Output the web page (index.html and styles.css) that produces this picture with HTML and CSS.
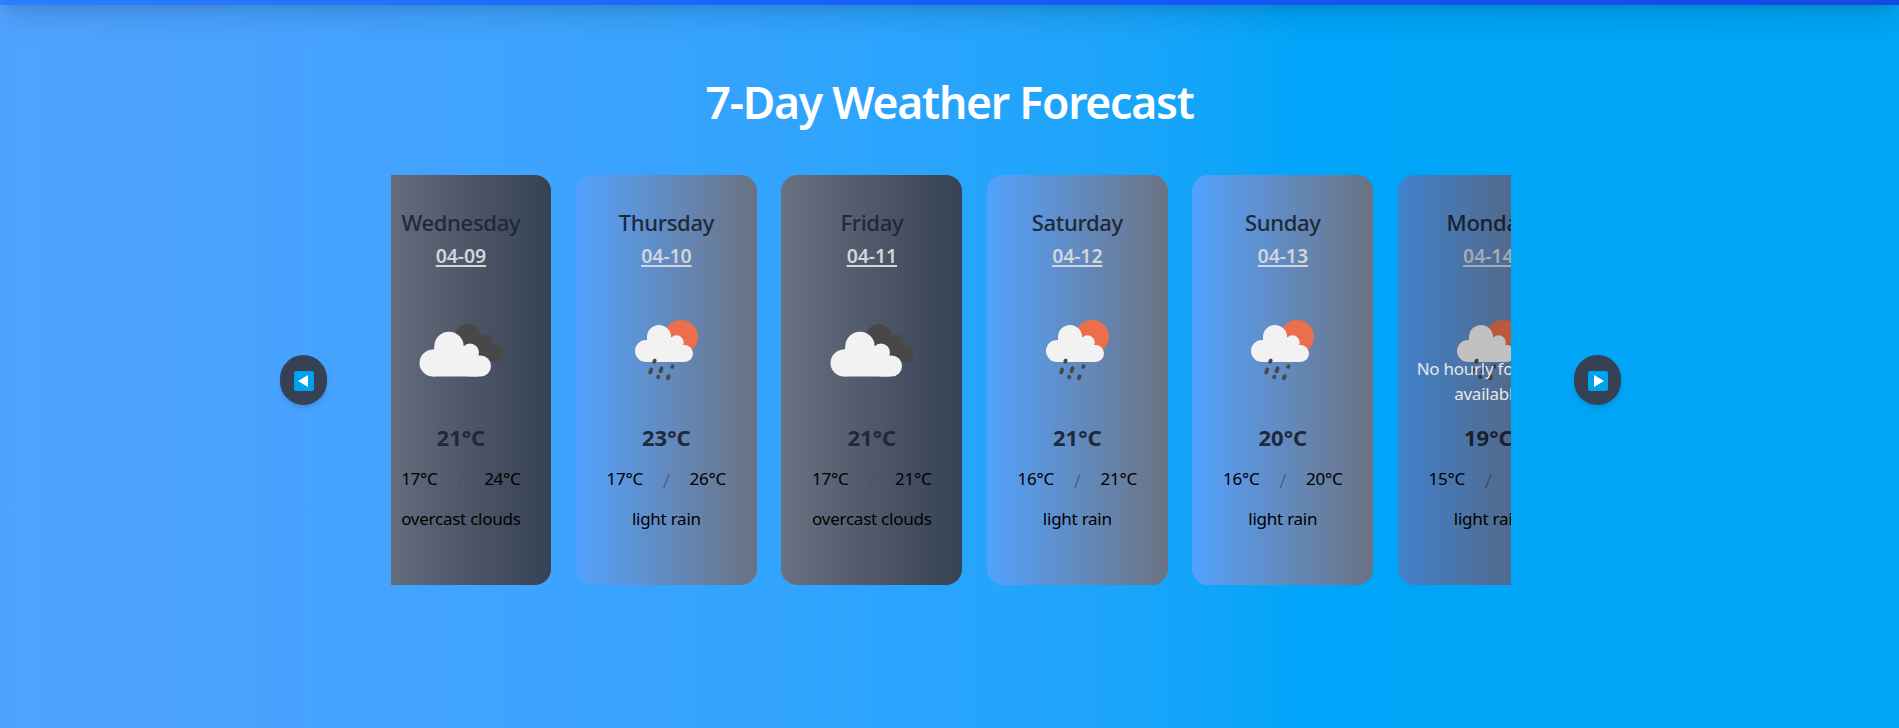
FILE: index.html
```html
<!DOCTYPE html>
<html lang="en">
<head>
<meta charset="utf-8">
<title>7-Day Weather Forecast</title>
<link rel="stylesheet" href="styles.css">
</head>
<body>
<svg class="defs" aria-hidden="true">
  <symbol id="clouds" viewBox="0 0 110 80">
    <g fill="#484848"><circle cx="68" cy="27" r="13"/><circle cx="85.500" cy="32" r="7.500"/><circle cx="94.500" cy="43.500" r="8.700"/><path d="M60 20h18l12 14v18H60z"/></g>
    <g fill="#f2f2f2"><circle cx="49" cy="36.500" r="14.700"/><circle cx="70" cy="42.500" r="9"/><rect x="19.500" y="39.500" width="27" height="27" rx="13.500"/><rect x="60" y="45.500" width="31" height="21" rx="10.500"/><path d="M34.300 39.500v-3h30l14 9v21H33v-27z"/></g>
  </symbol>
  <symbol id="rain" viewBox="0 0 100 80">
    <circle cx="61" cy="27" r="17" fill="#ec6e4c"/>
    <g fill="#f2f2f2"><circle cx="39" cy="27" r="12"/><circle cx="56.500" cy="32.500" r="7.200"/><rect x="15" y="30" width="22" height="22" rx="11"/><rect x="48" y="35" width="25" height="17" rx="8.500"/><path d="M27 30v-3h24l12 8v17H26V30z"/></g>
    <path d="M34.700 50.600l-.5 1.200M31.200 59.500l-1 3M41.600 58.300l-1.100 3M52.500 56.300l-.3.600M38.300 66.800l-.2.500M48.700 66.300l-.8 2" fill="none" stroke="#484848" stroke-width="3.800" stroke-linecap="round"/>
  </symbol>
</svg>
<header class="topbar"></header>
<main>
  <h1>7-Day Weather Forecast</h1>
  <div class="carousel">
    <button class="nav" aria-label="Previous"><svg viewBox="0 0 20 20"><rect width="20" height="20" rx="2" fill="#00a2ed"/><path d="M4 10l10-6v12z" fill="#fff"/></svg></button>
    <div class="viewport">
      <div class="track">
        <article class="card dark"><h2>Wednesday</h2><p class="date">04-09</p><svg class="icon cloudy"><use href="#clouds"/></svg><p class="temp">21°C</p><div class="range"><span>17°C</span><i>/</i><span>24°C</span></div><p class="desc">overcast clouds</p></article>
        <article class="card"><h2>Thursday</h2><p class="date">04-10</p><svg class="icon"><use href="#rain"/></svg><p class="temp">23°C</p><div class="range"><span>17°C</span><i>/</i><span>26°C</span></div><p class="desc">light rain</p></article>
        <article class="card dark"><h2>Friday</h2><p class="date">04-11</p><svg class="icon cloudy"><use href="#clouds"/></svg><p class="temp">21°C</p><div class="range"><span>17°C</span><i>/</i><span>21°C</span></div><p class="desc">overcast clouds</p></article>
        <article class="card"><h2>Saturday</h2><p class="date">04-12</p><svg class="icon"><use href="#rain"/></svg><p class="temp">21°C</p><div class="range"><span>16°C</span><i>/</i><span>21°C</span></div><p class="desc">light rain</p></article>
        <article class="card"><h2>Sunday</h2><p class="date">04-13</p><svg class="icon"><use href="#rain"/></svg><p class="temp">20°C</p><div class="range"><span>16°C</span><i>/</i><span>20°C</span></div><p class="desc">light rain</p></article>
        <article class="card"><h2>Monday</h2><p class="date">04-14</p><svg class="icon"><use href="#rain"/></svg><p class="temp">19°C</p><div class="range"><span>15°C</span><i>/</i><span>19°C</span></div><p class="desc">light rain</p><div class="overlay"><p>No hourly forecast<br>available</p></div></article>
      </div>
    </div>
    <button class="nav" aria-label="Next"><svg viewBox="0 0 20 20"><rect width="20" height="20" rx="2" fill="#00a2ed"/><path d="M16 10L6 4v12z" fill="#fff"/></svg></button>
  </div>
</main>
</body>
</html>
```
FILE: styles.css
```css
* { box-sizing: border-box; margin: 0; padding: 0; }
body {
  display: flow-root;
  height: 728px;
  overflow: hidden;
  font-family: "Segoe UI", "Noto Sans", "Open Sans", sans-serif;
  background: linear-gradient(to right in oklab, oklch(70.7% 0.165 254.624), oklch(68.5% 0.169 237.323));
}
.defs { position: absolute; width: 0; height: 0; }
.topbar {
  height: 72px;
  margin-top: -67px;
  background: linear-gradient(to right in oklab, #2b7fff, #155dfc 50%, #1447e6);
  box-shadow: 0 20px 25px -5px rgb(0 0 0 / .1), 0 8px 10px -6px rgb(0 0 0 / .1);
}
h1 {
  margin-top: 67px;
  height: 60px;
  line-height: 60px;
  text-align: center;
  color: #fff;
  font-size: 44.5px;
  font-weight: 600;
  letter-spacing: -1.25px;
}
.carousel {
  margin: 43px auto 0;
  width: 1343px;
  padding-left: 2px;
  display: flex;
  align-items: center;
  justify-content: space-between;
}
.nav {
  width: 47px;
  height: 50px;
  border: 0;
  border-radius: 24px;
  background: #364153;
  display: grid;
  place-items: center;
  box-shadow: 0 4px 6px -1px rgb(0 0 0 / .1), 0 2px 4px -2px rgb(0 0 0 / .1);
}
.nav svg { width: 20px; height: 20px; margin: 2px 0 0 1px; }
.viewport { width: 1120px; overflow: hidden; }
.track { display: flex; gap: 24.4px; margin-left: -20.2px; }
.card {
  position: relative;
  flex: 0 0 181.1px;
  height: 410px;
  padding-top: 31px;
  border-radius: 16px;
  overflow: hidden;
  text-align: center;
  background: linear-gradient(to right in oklab, #51a2ff, #6a7282);
}
.card.dark { background: linear-gradient(to right in oklab, #6a7282, #364153); }
h2 { font-size: 22px; line-height: 32px; font-weight: 500; color: #1e2939; letter-spacing: -.3px; }
.date { font-size: 19.5px; line-height: 28px; margin-top: 4px; font-weight: 600; color: #d1d5dc; text-decoration: underline; text-decoration-thickness: 2px; text-underline-offset: 2px; letter-spacing: -.1px; }
.icon { display: block; width: 100px; height: 80px; margin: 40px 0 0 44px; }
.cloudy { width: 110px; margin-left: 29.5px; }
.temp { font-size: 22px; line-height: 32px; margin-top: 31px; font-weight: 700; color: #1e2939; }
.range { display: flex; justify-content: center; gap: 16px; margin-top: 12px; font-size: 17px; line-height: 28px; letter-spacing: -.25px; }
.range span { width: 39px; white-space: nowrap; }
.range i { width: 12px; padding-top: 2px; font-style: normal; font-size: 20px; font-weight: 300; color: #4a5565; }
.desc { font-size: 17px; line-height: 28px; margin-top: 10px; letter-spacing: -.25px; }
.overlay {
  position: absolute;
  inset: 0;
  display: grid;
  place-items: center;
  padding-top: 2px;
  background: rgb(0 0 0 / .2);
  color: #e5e7eb;
  font-size: 17px;
  line-height: 25px;
  letter-spacing: -.25px;
}
```
